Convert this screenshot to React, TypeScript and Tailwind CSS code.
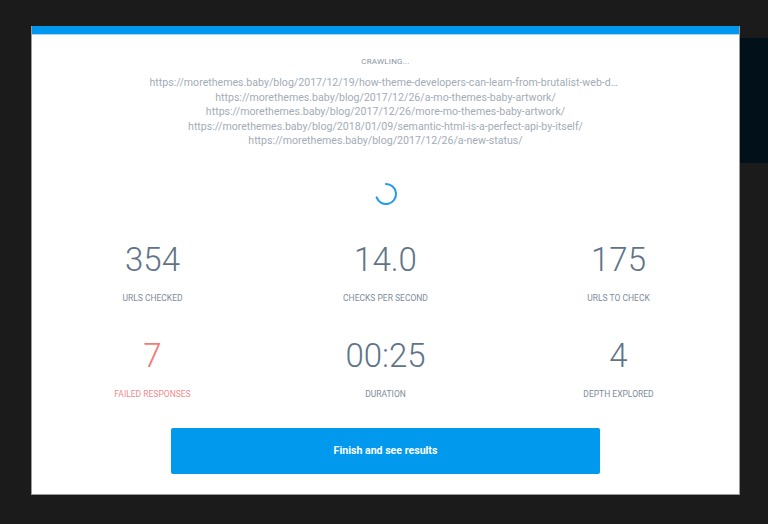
const urls = [
  'https://morethemes.baby/blog/2017/12/19/how-theme-developers-can-learn-from-brutalist-web-design/',
  'https://morethemes.baby/blog/2017/12/26/a-mo-themes-baby-artwork/',
  'https://morethemes.baby/blog/2017/12/26/more-mo-themes-baby-artwork/',
  'https://morethemes.baby/blog/2018/01/09/semantic-html-is-a-perfect-api-by-itself/',
  'https://morethemes.baby/blog/2017/12/26/a-new-status/',
];

const stats = [
  { value: '354', label: 'URLs checked' },
  { value: '14.0', label: 'Checks per second' },
  { value: '175', label: 'URLs to check' },
  { value: '7', label: 'Failed responses', danger: true },
  { value: '00:25', label: 'Duration' },
  { value: '4', label: 'Depth explored' },
];

function Spinner() {
  return (
    <svg className="w-[24px] h-[24px]" viewBox="0 0 24 24" fill="none">
      <path d="M12 2 A10 10 0 1 1 2.6 15.4" stroke="#1e9bea" strokeWidth={2} strokeLinecap="round" />
    </svg>
  );
}

export default function App() {
  return (
    <div
      className="relative w-[768px] h-[524px] bg-[#1b1b1b] overflow-hidden"
      style={{ fontFamily: 'Roboto, "Liberation Sans", sans-serif' }}
    >
      {/* page behind the modal */}
      <div className="absolute top-[38px] left-[560px] right-0 h-[125px] bg-[#02101a]" />

      {/* Modal */}
      <div className="absolute top-[26px] left-[31px] w-[709px] h-[469px] bg-white border-x border-b border-[#9a9a9a] flex flex-col">
        <div className="h-[8px] bg-[#0098ee]" />
        <div className="h-[1px] bg-[#a7d8f7]" />

        <p className="mt-[21px] text-center text-[8px] leading-[12px] tracking-[0.2px] text-[#8a959f] uppercase">
          Crawling...
        </p>

        <div className="mt-[8px] mx-auto w-[472px] text-center text-[10.6px] leading-[14.5px] text-[#a3acb6]">
          {urls.map((u) => (
            <p key={u} className="truncate">{u}</p>
          ))}
        </div>

        <div className="mt-[33px] flex justify-center">
          <Spinner />
        </div>

        <div className="mt-[34px] grid grid-cols-3 px-[4px] gap-y-[32px]">
          {stats.map((s) => (
            <div key={s.label} className="flex flex-col items-center">
              <span
                className={`text-[33px] leading-[40px] font-light ${s.danger ? 'text-[#f27a7a]' : 'text-[#5f7488]'}`}
              >
                {s.value}
              </span>
              <span
                className={`mt-[12px] text-[8.5px] leading-[12px] uppercase ${s.danger ? 'text-[#f28b8b]' : 'text-[#7d8c9a]'}`}
              >
                {s.label}
              </span>
            </div>
          ))}
        </div>

        <div className="mt-[28px] flex justify-center">
          <button className="w-[429px] h-[46px] bg-[#0099ee] rounded-[2px] text-white text-[10.6px] font-bold">
            Finish and see results
          </button>
        </div>
      </div>
    </div>
  );
}
